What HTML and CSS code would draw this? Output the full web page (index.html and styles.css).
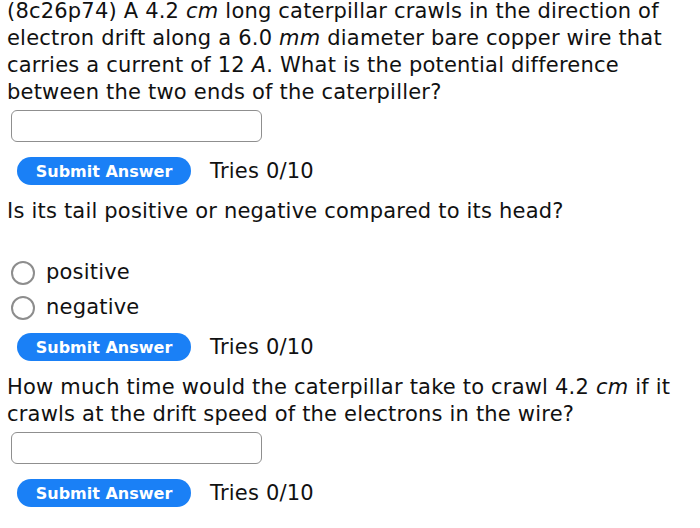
FILE: index.html
```html
<!DOCTYPE html>
<html>
<head>
<meta charset="utf-8">
<link rel="stylesheet" href="styles.css">
</head>
<body>
<div class="page">
  <section class="part">
    <p class="question">(8c26p74) A 4.2 <i>cm</i> long caterpillar crawls in the direction of electron drift along a 6.0 <i>mm</i> diameter bare copper wire that carries a current of 12 <i>A</i>. What is the potential difference between the two ends of the caterpiller?</p>
    <div class="answer"><input class="field" type="text"></div>
    <div class="submit-row">
      <button class="submit">Submit Answer</button>
      <span class="tries">Tries 0/10</span>
    </div>
  </section>
  <section class="part">
    <p class="question follow">Is its tail positive or negative compared to its head?</p>
    <div class="choices">
      <label class="choice"><span class="radio"></span>positive</label>
      <label class="choice"><span class="radio"></span>negative</label>
    </div>
    <div class="submit-row after-choices">
      <button class="submit">Submit Answer</button>
      <span class="tries">Tries 0/10</span>
    </div>
  </section>
  <section class="part">
    <p class="question follow">How much time would the caterpillar take to crawl 4.2 <i>cm</i> if it crawls at the drift speed of the electrons in the wire?</p>
    <div class="answer"><input class="field" type="text"></div>
    <div class="submit-row">
      <button class="submit">Submit Answer</button>
      <span class="tries">Tries 0/10</span>
    </div>
  </section>
</div>
</body>
</html>
```
FILE: styles.css
```css
html, body {
  margin: 0;
  padding: 0;
  background: #ffffff;
}
body {
  font-family: "DejaVu Sans", Verdana, sans-serif;
  font-size: 21px;
  line-height: 27px;
  letter-spacing: 0.2px;
  color: #111111;
}
.page {
  padding: 0 4px 0 7px;
  margin-top: -2px;
  width: 700px;
  box-sizing: border-box;
}
.question {
  margin: 0;
}
.follow {
  margin-top: 13px;
}
.answer {
  padding: 4px 0 0 4px;
}
.field {
  display: block;
  width: 251px;
  height: 32px;
  box-sizing: border-box;
  border: 1.5px solid #8f8f8f;
  border-radius: 6px;
  background: #fff;
  margin: 0;
  padding: 0;
}
.submit-row {
  display: flex;
  align-items: center;
  gap: 19px;
  padding: 15px 0 0 10px;
  height: 28px;
}
.after-choices {
  padding-top: 8px;
}
.submit {
  font-family: "DejaVu Sans", Verdana, sans-serif;
  font-weight: bold;
  font-size: 16px;
  letter-spacing: 0;
  color: #ffffff;
  background: #1a80f6;
  border: none;
  border-radius: 14px;
  width: 174px;
  height: 28px;
  padding: 0;
  margin: 0;
}
.tries {
  line-height: 27px;
}
.choices {
  padding-top: 30px;
}
.choice {
  display: flex;
  align-items: center;
  height: 35px;
  gap: 11px;
  padding-left: 4px;
}
.radio {
  width: 24px;
  height: 24px;
  border: 2px solid #8d8d8d;
  border-radius: 50%;
  box-sizing: border-box;
}
```
